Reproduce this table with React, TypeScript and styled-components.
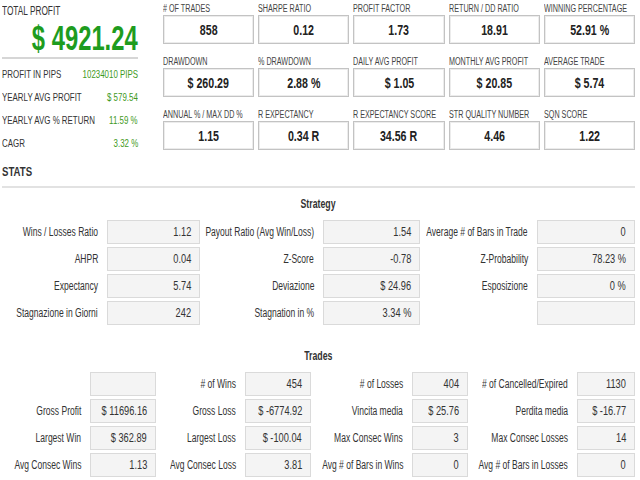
import * as React from 'react'
import styled, { createGlobalStyle } from 'styled-components'

const GlobalStyle = createGlobalStyle`
  html, body {
    margin: 0;
    padding: 0;
    background: #ffffff;
  }
  body {
    font-family: "Liberation Sans", Arial, sans-serif;
    color: #333333;
  }
`

// the reference uses a narrow face; squeeze Liberation Sans to match its widths
const Squeeze = styled.span<{ $k: number; $o?: 'left' | 'right' | 'center' }>`
  display: inline-block;
  white-space: nowrap;
  transform: scaleX(${p => p.$k});
  transform-origin: ${p => p.$o || 'left'} center;
`

const Page = styled.div`
  width: 640px;
  height: 480px;
  overflow: hidden;
  padding: 0 5px 0 2px;
  box-sizing: border-box;
`

const Top = styled.div`
  display: flex;
  align-items: flex-start;
`

const Summary = styled.div`
  width: 136px;
  margin-right: 25px;
  padding-top: 4px;
`

const SummaryTitle = styled.div`
  font-size: 12px;
  line-height: 14px;
  color: #333;
`

const BigProfit = styled.div`
  margin-top: 2px;
  display: flex;
  justify-content: flex-end;
  font-size: 35px;
  line-height: 36px;
  font-weight: bold;
  color: #1e9c1e;
  padding-bottom: 1px;
  border-bottom: 2px solid #d6d6d6;
`

const SummaryList = styled.div`
  margin-top: 3px;
`

const SummaryRow = styled.div`
  display: flex;
  align-items: center;
  height: 23px;
  font-size: 11px;
`

const SummaryLabel = styled.span`
  flex: 1 1 0;
  min-width: 0;
  color: #333;
`

const SummaryValue = styled.span`
  flex: none;
  text-align: right;
  color: #3f9a1c;
`

const MetricGrid = styled.div`
  width: 473px;
  display: grid;
  grid-template-columns: repeat(5, 1fr);
  column-gap: 4px;
  row-gap: 12px;
  padding-top: 3px;
`

const Metric = styled.div`
  display: flex;
  flex-direction: column;
  min-width: 0;
`

const MetricLabel = styled.div`
  font-size: 10px;
  line-height: 12px;
  color: #444;
  text-transform: uppercase;
  white-space: nowrap;
`

const MetricBox = styled.div`
  height: 29px;
  box-sizing: border-box;
  border: 1px solid #c3c3c3;
  box-shadow: inset 0 0 0 1px #ececec;
  display: flex;
  align-items: center;
  justify-content: center;
  font-size: 14px;
  font-weight: bold;
  color: #222;
`

const SectionHeading = styled.div`
  margin-top: 10px;
  font-size: 12.5px;
  line-height: 16px;
  font-weight: bold;
  color: #333;
  padding-bottom: 6px;
  border-bottom: 2px solid #e2e2e2;
`

const TableTitle = styled.div<{ $top: number }>`
  margin-top: ${p => p.$top}px;
  margin-bottom: 8px;
  text-align: center;
  font-size: 12px;
  line-height: 16px;
  font-weight: bold;
  color: #333;
`

const StatTable = styled.div<{ $cols: string }>`
  display: grid;
  grid-template-columns: ${p => p.$cols};
  grid-auto-rows: 24px;
  row-gap: 3px;
`

const StatLabel = styled.div`
  display: flex;
  align-items: center;
  justify-content: flex-end;
  min-width: 0;
  padding-right: 9px;
  font-size: 12px;
  color: #333;
`

const StatValue = styled.div`
  display: flex;
  align-items: center;
  justify-content: flex-end;
  min-width: 0;
  padding-right: 8px;
  box-sizing: border-box;
  background: #f4f4f4;
  border: 1px solid #dadada;
  font-size: 12px;
  color: #333;
`

const summaryRows = [
  ['PROFIT IN PIPS', '10234010 PIPS'],
  ['YEARLY AVG PROFIT', '$ 579.54'],
  ['YEARLY AVG % RETURN', '11.59 %'],
  ['CAGR', '3.32 %'],
]

const metrics = [
  ['# of trades', '858'],
  ['Sharpe ratio', '0.12'],
  ['Profit factor', '1.73'],
  ['Return / DD ratio', '18.91'],
  ['Winning percentage', '52.91 %'],
  ['Drawdown', '$ 260.29'],
  ['% Drawdown', '2.88 %'],
  ['Daily avg profit', '$ 1.05'],
  ['Monthly avg profit', '$ 20.85'],
  ['Average trade', '$ 5.74'],
  ['Annual % / Max DD %', '1.15'],
  ['R expectancy', '0.34 R'],
  ['R expectancy score', '34.56 R'],
  ['STR quality number', '4.46'],
  ['SQN score', '1.22'],
]

const strategy = [
  [['Wins / Losses Ratio', '1.12'], ['Payout Ratio (Avg Win/Loss)', '1.54'], ['Average # of Bars in Trade', '0']],
  [['AHPR', '0.04'], ['Z-Score', '-0.78'], ['Z-Probability', '78.23 %']],
  [['Expectancy', '5.74'], ['Deviazione', '$ 24.96'], ['Esposizione', '0 %']],
  [['Stagnazione in Giorni', '242'], ['Stagnation in %', '3.34 %'], ['', '']],
]

const trades = [
  [['', ''], ['# of Wins', '454'], ['# of Losses', '404'], ['# of Cancelled/Expired', '1130']],
  [['Gross Profit', '$ 11696.16'], ['Gross Loss', '$ -6774.92'], ['Vincita media', '$ 25.76'], ['Perdita media', '$ -16.77']],
  [['Largest Win', '$ 362.89'], ['Largest Loss', '$ -100.04'], ['Max Consec Wins', '3'], ['Max Consec Losses', '14']],
  [['Avg Consec Wins', '1.13'], ['Avg Consec Loss', '3.81'], ['Avg # of Bars in Wins', '0'], ['Avg # of Bars in Losses', '0']],
]

const renderRows = (rows: string[][][]) =>
  rows.map((row, r) =>
    row.map(([label, value], c) => (
      <React.Fragment key={`${r}-${c}`}>
        <StatLabel>
          <Squeeze $k={0.71} $o="right">{label}</Squeeze>
        </StatLabel>
        <StatValue>
          <Squeeze $k={0.77} $o="right">{value}</Squeeze>
        </StatValue>
      </React.Fragment>
    )),
  )

export default function App() {
  return (
    <Page>
      <GlobalStyle />
      <Top>
        <Summary>
          <SummaryTitle>
            <Squeeze $k={0.69}>TOTAL PROFIT</Squeeze>
          </SummaryTitle>
          <BigProfit>
            <Squeeze $k={0.68} $o="right">$ 4921.24</Squeeze>
          </BigProfit>
          <SummaryList>
            {summaryRows.map(([label, value]) => (
              <SummaryRow key={label}>
                <SummaryLabel>
                  <Squeeze $k={0.72}>{label}</Squeeze>
                </SummaryLabel>
                <SummaryValue>
                  <Squeeze $k={0.72} $o="right">{value}</Squeeze>
                </SummaryValue>
              </SummaryRow>
            ))}
          </SummaryList>
        </Summary>
        <MetricGrid>
          {metrics.map(([label, value]) => (
            <Metric key={label}>
              <MetricLabel>
                <Squeeze $k={0.72}>{label}</Squeeze>
              </MetricLabel>
              <MetricBox>
                <Squeeze $k={0.76} $o="center">{value}</Squeeze>
              </MetricBox>
            </Metric>
          ))}
        </MetricGrid>
      </Top>

      <SectionHeading>
        <Squeeze $k={0.77}>STATS</Squeeze>
      </SectionHeading>

      <TableTitle $top={8}>
        <Squeeze $k={0.73} $o="center">Strategy</Squeeze>
      </TableTitle>
      <StatTable $cols="105px 93px 123px 97px 117px 98px">
        {renderRows(strategy)}
      </StatTable>

      <TableTitle $top={23}>
        <Squeeze $k={0.73} $o="center">Trades</Squeeze>
      </TableTitle>
      <StatTable $cols="88px 66px 89px 66px 101px 56px 109px 58px">
        {renderRows(trades)}
      </StatTable>
    </Page>
  )
}
